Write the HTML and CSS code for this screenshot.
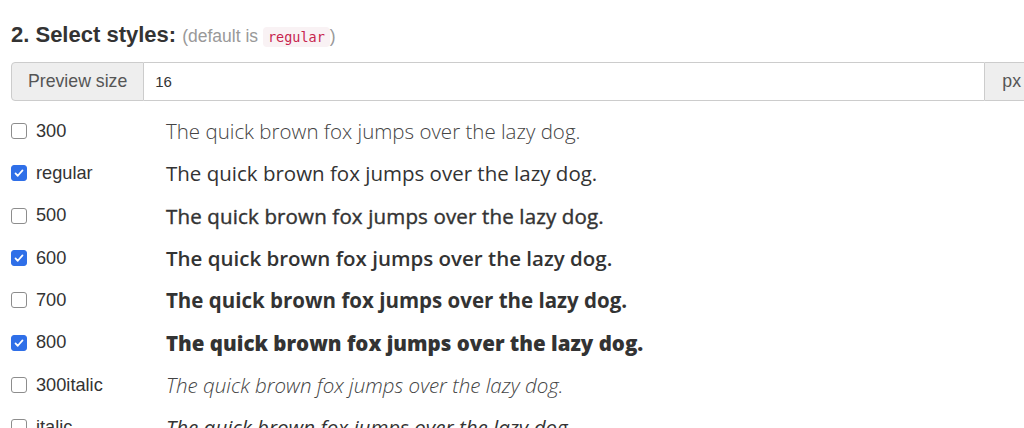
FILE: index.html
```html
<!DOCTYPE html>
<html lang="en">
<head>
    <meta charset="UTF-8">
    <meta name="viewport" content="width=device-width, initial-scale=1.0">
    <title>Select styles</title>
    <link rel="stylesheet" href="styles.css">
</head>
<body>
    <h3 class="step-title">2. Select styles: <small>(default is <code>regular</code>)</small></h3>

    <div class="input-group">
        <span class="addon">Preview size</span>
        <input type="text" class="size-input" value="16">
        <span class="addon addon-right">px</span>
    </div>

    <div class="styles">
        <div class="style-row">
            <label class="variant"><input type="checkbox" class="check"> 300</label>
            <div class="preview w300">The quick brown fox jumps over the lazy dog.</div>
        </div>
        <div class="style-row">
            <label class="variant"><input type="checkbox" class="check" checked> regular</label>
            <div class="preview w400">The quick brown fox jumps over the lazy dog.</div>
        </div>
        <div class="style-row">
            <label class="variant"><input type="checkbox" class="check"> 500</label>
            <div class="preview w500">The quick brown fox jumps over the lazy dog.</div>
        </div>
        <div class="style-row">
            <label class="variant"><input type="checkbox" class="check" checked> 600</label>
            <div class="preview w600">The quick brown fox jumps over the lazy dog.</div>
        </div>
        <div class="style-row">
            <label class="variant"><input type="checkbox" class="check"> 700</label>
            <div class="preview w700">The quick brown fox jumps over the lazy dog.</div>
        </div>
        <div class="style-row">
            <label class="variant"><input type="checkbox" class="check" checked> 800</label>
            <div class="preview w800">The quick brown fox jumps over the lazy dog.</div>
        </div>
        <div class="style-row">
            <label class="variant"><input type="checkbox" class="check"> 300italic</label>
            <div class="preview w300 ital">The quick brown fox jumps over the lazy dog.</div>
        </div>
        <div class="style-row">
            <label class="variant"><input type="checkbox" class="check"> italic</label>
            <div class="preview w400 ital">The quick brown fox jumps over the lazy dog.</div>
        </div>
    </div>
</body>
</html>
```

FILE: styles.css
```css
body {
    margin: 0;
    padding: 0 0 0 11px;
    font-family: "Liberation Sans", Arial, sans-serif;
    color: #333;
    background: #fff;
    overflow: hidden;
}
.step-title {
    margin: 22px 0 12px;
    font-size: 22px;
    font-weight: bold;
    line-height: 26px;
}
.step-title small {
    font-size: 17.5px;
    font-weight: normal;
    color: #999;
}
.step-title code {
    font-family: "DejaVu Sans Mono", "Liberation Mono", monospace;
    font-size: 13.5px;
    color: #c7254e;
    background: #f9f2f4;
    padding: 2px 5px;
    border-radius: 4px;
}
.input-group {
    display: flex;
    width: 1028px;
    height: 39px;
}
.addon {
    display: flex;
    align-items: center;
    padding: 0 16px;
    background: #eee;
    border: 1px solid #ccc;
    border-radius: 4px 0 0 4px;
    font-size: 17.7px;
    color: #555;
}
.addon-right {
    border-radius: 0 4px 4px 0;
    padding: 0 17px;
}
.size-input {
    flex: 1;
    border: 1px solid #ccc;
    border-left: none;
    border-right: none;
    padding: 0 11px;
    font-family: "Liberation Sans", Arial, sans-serif;
    font-size: 15px;
    color: #333;
    outline: none;
}
.styles {
    margin-top: 9px;
}
.style-row {
    display: flex;
    align-items: center;
    height: 42.33px;
}
.variant {
    display: flex;
    align-items: center;
    width: 155px;
    font-size: 18.2px;
    color: #333;
}
.check {
    appearance: none;
    width: 16px;
    height: 16px;
    margin: 0 9px 0 0;
    border: 1px solid #8d8d8d;
    border-radius: 3px;
    background: #fff;
}
.check:checked {
    border-color: #2f6fe8;
    background: #2f6fe8 url("data:image/svg+xml;utf8,<svg xmlns='http://www.w3.org/2000/svg' viewBox='0 0 16 16'><path d='M4 8.4l2.6 2.8L12 5' fill='none' stroke='white' stroke-width='2' stroke-linecap='round' stroke-linejoin='round'/></svg>") center/14px no-repeat;
}
.preview {
    font-family: "Open Sans", sans-serif;
    font-size: 20.5px;
    color: #333;
    white-space: nowrap;
}
.w300 { font-weight: 300; color: #444; }
.w400 { font-weight: 400; }
.w500 { font-weight: 400; -webkit-text-stroke: 0.4px #333; letter-spacing: 0.15px; }
.w600 { font-weight: 600; }
.w700 { font-weight: 700; }
.w800 { font-weight: 800; }
.ital { font-style: italic; }
```
